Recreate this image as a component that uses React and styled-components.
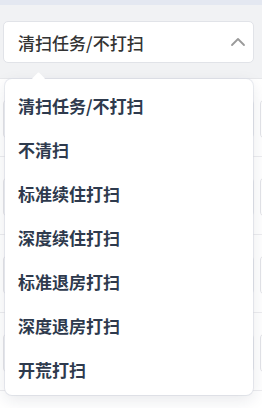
import React from "react";
import styled, { createGlobalStyle } from "styled-components";

const Global = createGlobalStyle`
  html, body { margin: 0; padding: 0; }
  body {
    width: 262px; height: 408px; overflow: hidden;
    background: #ffffff;
    font-family: "Noto Sans CJK SC", "Noto Sans", sans-serif;
  }
`;

const Page = styled.div`
  position: relative;
  width: 262px;
  height: 408px;
  overflow: hidden;
  background: #ffffff;
`;

const TopBand = styled.div`
  height: 5px;
  background: #e4e8f1;
`;

const Header = styled.div`
  background: #f1f2f4;
  padding: 16px 8px 15px 3px;
  border-bottom: 1px solid #e6e7ea;
`;

const SelectBox = styled.div`
  height: 40px;
  border: 1px solid #e1e3e8;
  border-radius: 5px;
  background: #ffffff;
  display: flex;
  align-items: center;
  justify-content: space-between;
  padding: 0 7px 0 14px;
`;

const SelectText = styled.span`
  font-size: 17px;
  font-weight: 500;
  color: #333333;
  line-height: 1;
`;

const FormRow = styled.div`
  display: flex;
  gap: 6px;
  padding: 20px 0 17px 3px;
  border-bottom: 1px solid #ececef;
`;

const Field = styled.div`
  flex: 0 0 ${(p) => p.$w}px;
  height: 40px;
  border: 1px solid #e3e4e8;
  border-radius: 5px;
  box-sizing: border-box;
`;

const Panel = styled.div`
  position: absolute;
  left: 5px;
  top: 79px;
  width: 248px;
  box-sizing: border-box;
  padding: 4px 0;
  background: #ffffff;
  border-radius: 7px;
  box-shadow: 0 5px 16px rgba(30, 40, 70, 0.1), 0 0 0 1px rgba(220, 224, 232, 0.5);
  &::before {
    content: "";
    position: absolute;
    left: 29px;
    top: -5px;
    width: 9px;
    height: 9px;
    background: #ffffff;
    transform: rotate(45deg);
    border-top-left-radius: 1px;
  }
`;

const Item = styled.div`
  position: relative;
  height: 44px;
  display: flex;
  align-items: center;
  padding-left: 13px;
  font-size: 17px;
  font-weight: 700;
  color: #2e3a4d;
`;

const Chevron = () => (
  <svg width="16" height="10" viewBox="0 0 16 10">
    <path d="M2 8 L8 2 L14 8" fill="none" stroke="#9a9a9a" strokeWidth="1.8" strokeLinecap="round" strokeLinejoin="round" />
  </svg>
);

const options = [
  "清扫任务/不打扫",
  "不清扫",
  "标准续住打扫",
  "深度续住打扫",
  "标准退房打扫",
  "深度退房打扫",
  "开荒打扫",
];

export default function App() {
  return (
    <Page>
      <Global />
      <TopBand />
      <Header>
        <SelectBox>
          <SelectText>清扫任务/不打扫</SelectText>
          <Chevron />
        </SelectBox>
      </Header>
      <FormRow>
        <Field $w={251} />
        <Field $w={60} />
      </FormRow>
      <FormRow>
        <Field $w={251} />
        <Field $w={60} />
      </FormRow>
      <FormRow>
        <Field $w={251} />
        <Field $w={60} />
      </FormRow>
      <FormRow>
        <Field $w={251} />
        <Field $w={60} />
      </FormRow>
      <Panel>
        {options.map((o) => (
          <Item key={o}>{o}</Item>
        ))}
      </Panel>
    </Page>
  );
}
